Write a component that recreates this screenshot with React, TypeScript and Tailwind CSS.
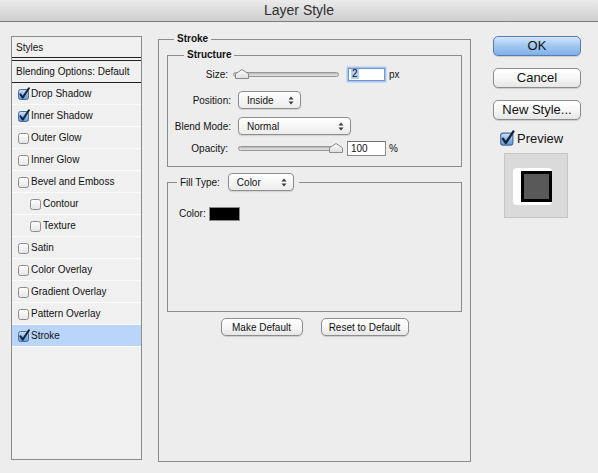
import React from "react";

type Effect = {
  name: string;
  checked?: boolean;
  indent?: boolean;
  selected?: boolean;
};

const effects: Effect[] = [
  { name: "Drop Shadow", checked: true },
  { name: "Inner Shadow", checked: true },
  { name: "Outer Glow" },
  { name: "Inner Glow" },
  { name: "Bevel and Emboss" },
  { name: "Contour", indent: true },
  { name: "Texture", indent: true },
  { name: "Satin" },
  { name: "Color Overlay" },
  { name: "Gradient Overlay" },
  { name: "Pattern Overlay" },
  { name: "Stroke", checked: true, selected: true },
];

function Checkbox({ checked, big }: { checked?: boolean; big?: boolean }) {
  const w = big ? 16 : 13;
  const h = big ? 17 : 14;
  return (
    <svg width={w} height={h} viewBox="0 0 13 14" className="shrink-0">
      <defs>
        <linearGradient id="cbOn" x1="0" y1="0" x2="0" y2="1">
          <stop offset="0" stopColor="#cfe2f7" />
          <stop offset="0.5" stopColor="#8fbbe9" />
          <stop offset="1" stopColor="#5f97d6" />
        </linearGradient>
        <linearGradient id="cbOff" x1="0" y1="0" x2="0" y2="1">
          <stop offset="0" stopColor="#ffffff" />
          <stop offset="1" stopColor="#e4e4e4" />
        </linearGradient>
      </defs>
      <rect
        x="0.5"
        y="2.5"
        width="10"
        height="10"
        rx="2"
        fill={checked ? "url(#cbOn)" : "url(#cbOff)"}
        stroke={checked ? "#4b6f9c" : "#8c8c8c"}
      />
      {checked && (
        <path
          d="M2.4 7.3 L4.7 10.6 L10.9 1.3"
          fill="none"
          stroke="#17233c"
          strokeWidth="2"
          strokeLinecap="round"
          strokeLinejoin="round"
        />
      )}
    </svg>
  );
}

function Arrows() {
  return (
    <svg width="6" height="9" viewBox="0 0 6 9" className="shrink-0">
      <path d="M0.5 3.5 L3 0.5 L5.5 3.5 Z" fill="#3a3a3a" />
      <path d="M0.5 5.5 L3 8.5 L5.5 5.5 Z" fill="#3a3a3a" />
    </svg>
  );
}

function Select({ label, className }: { label: string; className: string }) {
  return (
    <div
      className={
        "h-[18px] rounded-[4px] border border-[#8e8e8e] bg-gradient-to-b from-white to-[#ececec] shadow-[0_1px_1px_rgba(0,0,0,0.12)] flex items-center justify-between pl-[8px] pr-[6px] text-[10px] " +
        className
      }
    >
      <span>{label}</span>
      <Arrows />
    </div>
  );
}

function Thumb() {
  return (
    <svg width="14" height="10" viewBox="0 0 14 10">
      <defs>
        <linearGradient id="thumbFill" x1="0" y1="0" x2="0" y2="1">
          <stop offset="0" stopColor="#ffffff" />
          <stop offset="1" stopColor="#dcdcdc" />
        </linearGradient>
      </defs>
      <path
        d="M7 0.5 L13.5 4.8 V9.5 H0.5 V4.8 Z"
        fill="url(#thumbFill)"
        stroke="#8a8a8a"
        strokeLinejoin="round"
      />
    </svg>
  );
}

function Slider({ className, atEnd }: { className: string; atEnd?: boolean }) {
  return (
    <div className={"relative h-[12px] flex items-center " + className}>
      <div className="w-full h-[5px] rounded-full border border-[#959595] bg-gradient-to-b from-[#b9b9b9] to-[#e8e8e8]" />
      <div className={"absolute top-[1px] " + (atEnd ? "right-[-3px]" : "left-[2px]")}>
        <Thumb />
      </div>
    </div>
  );
}

function AquaButton({
  children,
  className,
  primary,
}: {
  children: React.ReactNode;
  className: string;
  primary?: boolean;
}) {
  return (
    <button
      className={
        "flex items-center justify-center rounded-[5px] border shadow-[0_1px_1px_rgba(0,0,0,0.15)] " +
        (primary
          ? "border-[#5a7ca8] bg-gradient-to-b from-[#d4e6fa] via-[#a0c6ef] to-[#7eb1ea] "
          : "border-[#8d8d8d] bg-gradient-to-b from-white via-[#f7f7f7] to-[#e6e6e6] ") +
        className
      }
    >
      {children}
    </button>
  );
}

function StylesList() {
  return (
    <div className="mt-[14px] w-[131px] h-[424px] shrink-0 border border-[#8b8b8b] bg-[#f0f0f0] flex flex-col">
      <div className="h-[21px] border-b border-[#222] pl-[4px] flex items-center">Styles</div>
      <div className="h-[2px]" />
      <div className="h-[23px] border-y border-[#222] pl-[4px] flex items-center">
        Blending Options: Default
      </div>
      {effects.map((e) => (
        <div
          key={e.name}
          className={
            "h-[22px] border-b border-[#fbfbfb] flex items-center " +
            (e.indent ? "pl-[18px] " : "pl-[6px] ") +
            (e.selected ? "bg-[#b9d6fa]" : "")
          }
        >
          <Checkbox checked={e.checked} />
          <span>{e.name}</span>
        </div>
      ))}
    </div>
  );
}

function StrokePanel() {
  return (
    <fieldset className="mt-[10px] ml-[16px] w-[313px] h-[430px] shrink-0 border border-[#8c8c8c] p-0 m-0">
      <legend className="ml-[15px] px-[3px] font-bold leading-[14px]">Stroke</legend>
      <div className="px-[8px] pt-[2px] flex flex-col">
        {/* STRUCTURE */}
        <fieldset className="border border-[#8c8c8c] p-0 m-0">
          <legend className="ml-[16px] px-[3px] font-bold leading-[14px]">Structure</legend>
          <div className="flex flex-col pb-[9px]">
            <div className="mt-[3px] h-[18px] flex items-center">
              <span className="w-[60px] text-right">Size:</span>
              <Slider className="ml-[5px] w-[106px]" />
              <div className="ml-[9px] w-[37px] h-[13px] border border-[#6c95d2] shadow-[0_0_0_1.5px_#a9c7ee] bg-white flex items-center pl-[2px]">
                <span className="bg-[#b3d1f4] px-[1px] leading-[10px]">2</span>
              </div>
              <span className="ml-[4px]">px</span>
            </div>
            <div className="mt-[8px] h-[18px] flex items-center">
              <span className="w-[63px] text-right">Position:</span>
              <Select label="Inside" className="ml-[7px] w-[63px]" />
            </div>
            <div className="mt-[8px] h-[18px] flex items-center">
              <span className="w-[63px] text-right">Blend Mode:</span>
              <Select label="Normal" className="ml-[7px] w-[113px]" />
            </div>
            <div className="mt-[4px] h-[18px] flex items-center">
              <span className="w-[60px] text-right">Opacity:</span>
              <Slider className="ml-[10px] w-[102px]" atEnd />
              <div className="ml-[7px] w-[39px] h-[15px] border border-[#8a8a8a] border-t-[#6f6f6f] bg-white flex items-center pl-[3px]">
                100
              </div>
              <span className="ml-[3px]">%</span>
            </div>
          </div>
        </fieldset>

        {/* FILL TYPE */}
        <fieldset className="mt-[6px] h-[139px] border border-[#8c8c8c] p-0 m-0">
          <legend className="ml-[9px] pl-[3px] pr-[5px]">
            <div className="flex items-center">
              <span>Fill Type:</span>
              <Select label="Color" className="ml-[8px] w-[66px]" />
            </div>
          </legend>
          <div className="pl-[11px] pt-[15px] flex items-center">
            <span>Color:</span>
            <div className="ml-[3px] w-[31px] h-[14px] bg-black border border-[#8a8a8a]" />
          </div>
        </fieldset>

        <div className="mt-[6px] flex justify-center gap-[18px]">
          <AquaButton className="w-[82px] h-[18px] text-[10px]">Make Default</AquaButton>
          <AquaButton className="w-[88px] h-[18px] text-[10px]">Reset to Default</AquaButton>
        </div>
      </div>
    </fieldset>
  );
}

function RightColumn() {
  return (
    <div className="mt-[14px] ml-[22px] w-[88px] shrink-0 flex flex-col text-[13px]">
      <AquaButton primary className="h-[20px] w-full">OK</AquaButton>
      <AquaButton className="mt-[12px] h-[20px] w-full">Cancel</AquaButton>
      <AquaButton className="mt-[12px] h-[20px] w-full">New Style...</AquaButton>
      <div className="mt-[10px] h-[17px] pl-[7px] flex items-center gap-[1px]">
        <Checkbox checked big />
        <span>Preview</span>
      </div>
      <div className="mt-[6px] ml-[11px] w-[64px] h-[65px] bg-[#dadada] border border-[#c6c6c6]">
        <svg width="62" height="63" viewBox="0 0 62 63">
          <rect x="8" y="14" width="39" height="37" rx="4" fill="#ffffff" />
          <rect x="16" y="17" width="31" height="31" fill="#000000" />
          <rect x="19" y="20" width="25" height="25" fill="#595959" />
        </svg>
      </div>
    </div>
  );
}

export default function App() {
  return (
    <div className="w-[598px] h-[473px] overflow-hidden bg-[#ededed] font-['Liberation_Sans',Arial,sans-serif] text-[10px] text-[#111] flex flex-col">
      <div className="h-[22px] shrink-0 border-b border-[#7d7d7d] bg-gradient-to-b from-[#ebebeb] to-[#cfcfcf] flex items-center justify-center text-[14px] text-[#2f2f2f]">
        Layer Style
      </div>
      <div className="flex items-start pl-[11px]">
        <StylesList />
        <StrokePanel />
        <RightColumn />
      </div>
    </div>
  );
}
